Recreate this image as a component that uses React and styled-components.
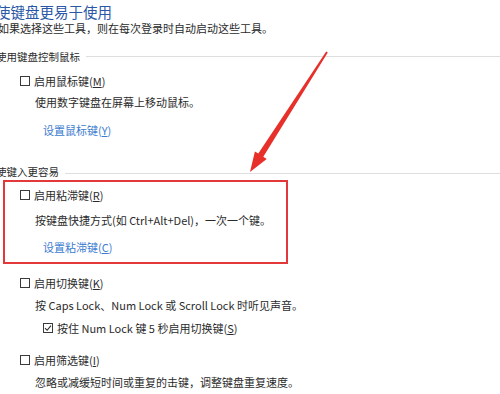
import React from 'react';
import styled, { createGlobalStyle } from 'styled-components';

const GlobalStyle = createGlobalStyle`
  html, body {
    margin: 0;
    padding: 0;
    background: #ffffff;
  }
  body {
    font-family: "Noto Sans CJK SC", "Noto Sans", sans-serif;
    color: #2b2b2b;
    overflow: hidden;
  }
`;

const Page = styled.div`
  position: relative;
  width: 500px;
  height: 394px;
  overflow: hidden;
  background: #fff;
`;

const Title = styled.h1`
  margin: 3px 0 0 -4px;
  font-size: 14.5px;
  font-weight: 400;
  line-height: 18px;
  color: #2a57a6;
  white-space: nowrap;
`;

const Subtitle = styled.p`
  margin: 0 0 0 -2px;
  font-size: 11px;
  line-height: 14px;
  color: #2b2b2b;
  white-space: nowrap;
`;

const SectionHeader = styled.div`
  display: flex;
  align-items: center;
  gap: 6px;
  margin: ${p => p.top}px 0 0 -4px;
  font-size: 10.5px;
  line-height: 16px;
  color: #2b2b2b;
  white-space: nowrap;

  &::after {
    content: '';
    flex: 1;
    height: 1px;
    margin-top: ${p => p.lineShift}px;
    background: #dedede;
  }
`;

const Highlight = styled.div`
  margin-left: 3px;
  width: 266px;
  padding: 3px 0 5px 15px;
  border: 2px solid #e2383a;
`;

const OptionRow = styled.label`
  display: flex;
  align-items: center;
  gap: 4px;
  margin: ${p => p.top ?? 0}px 0 0 ${p => p.left ?? 20}px;
  font-size: 11px;
  line-height: 20px;
  white-space: nowrap;
  color: #2b2b2b;
`;

const Box = styled.span`
  width: 10px;
  height: 10px;
  border: 1px solid #3a3a3a;
  box-sizing: border-box;
  display: flex;
  align-items: center;
  justify-content: center;
  background: #fff;
  flex: none;
`;

const Key = styled.span`
  text-decoration: underline;
  text-underline-offset: 1px;
`;

const Desc = styled.p`
  margin: ${p => p.top ?? 0}px 0 0 ${p => p.left ?? 35}px;
  font-size: 11px;
  line-height: 20px;
  white-space: nowrap;
  color: #2b2b2b;
`;

const SetupLink = styled.a`
  display: block;
  margin: ${p => p.top ?? 0}px 0 0 ${p => p.left ?? 43}px;
  font-size: 11px;
  line-height: 20px;
  color: #3d7cd0;
  text-decoration: none;
  white-space: nowrap;
`;

const ArrowLayer = styled.svg`
  position: absolute;
  left: 0;
  top: 0;
  width: 500px;
  height: 394px;
  pointer-events: none;
`;

const Check = ({ checked }) => (
  <Box>
    {checked && (
      <svg width="8" height="8" viewBox="0 0 8 8">
        <path d="M1 4.2 L3.1 6.3 L7 1.6" fill="none" stroke="#2b2b2b" strokeWidth="1.1" />
      </svg>
    )}
  </Box>
);

const Option = ({ label, hotkey, checked, top, left }) => (
  <OptionRow top={top} left={left}>
    <Check checked={checked} />
    <span>
      {label}(<Key>{hotkey}</Key>)
    </span>
  </OptionRow>
);

export default function App() {
  return (
    <Page>
      <GlobalStyle />
      <Title>使键盘更易于使用</Title>
      <Subtitle>如果选择这些工具，则在每次登录时自动启动这些工具。</Subtitle>

      <SectionHeader top={14} lineShift={-1}>使用键盘控制鼠标</SectionHeader>
      <Option label="启用鼠标键" hotkey="M" top={6} />
      <Desc top={1}>使用数字键盘在屏幕上移动鼠标。</Desc>
      <SetupLink top={8}>设置鼠标键(<Key>Y</Key>)</SetupLink>

      <SectionHeader top={24} lineShift={2}>使键入更容易</SectionHeader>
      <Highlight>
        <Option label="启用粘滞键" hotkey="R" left={0} />
        <Desc top={5} left={15}>按键盘快捷方式(如 Ctrl+Alt+Del)，一次一个键。</Desc>
        <SetupLink top={7} left={23}>设置粘滞键(<Key>C</Key>)</SetupLink>
      </Highlight>

      <Option label="启用切换键" hotkey="K" top={9} />
      <Desc top={2}>按 Caps Lock、Num Lock 或 Scroll Lock 时听见声音。</Desc>
      <Option label="按住 Num Lock 键 5 秒启用切换键" hotkey="S" checked top={3} left={43} />

      <Option label="启用筛选键" hotkey="I" top={12} />
      <Desc top={2}>忽略或减缓短时间或重复的击键，调整键盘重复速度。</Desc>

      <ArrowLayer viewBox="0 0 500 394">
        <polygon
          points="326.2,51.5 327.8,52.5 263.3,156.8 266.7,159 250,172 254.9,151.4 258.3,153.6"
          fill="#e8302a"
        />
      </ArrowLayer>
    </Page>
  );
}
